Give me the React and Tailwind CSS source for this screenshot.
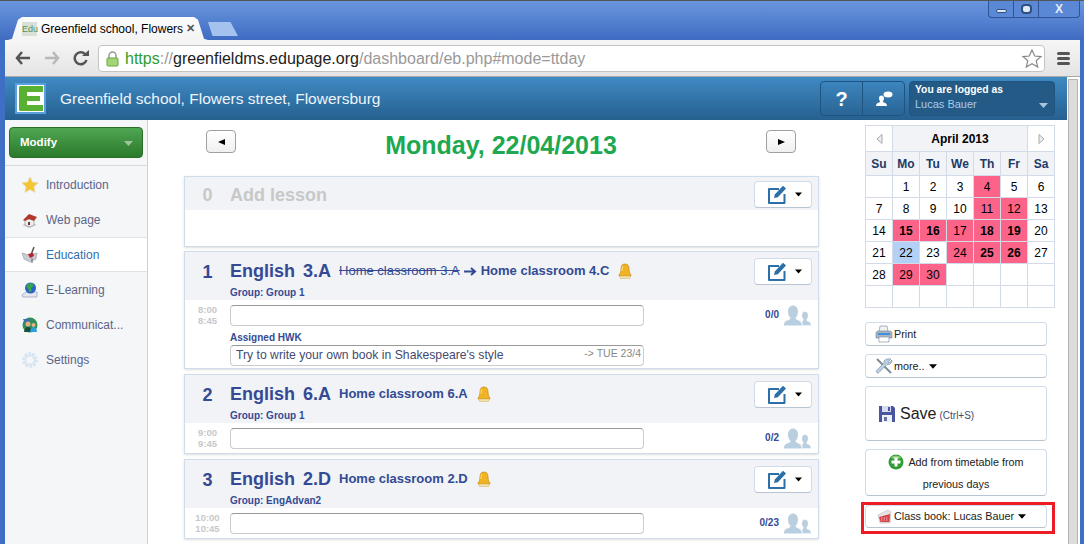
const Caret = ({ className = "" }) => (
    <svg width="9" height="5" viewBox="0 0 9 5" className={className}>
        <path d="M0 0h9L4.5 5z" fill="currentColor" />
    </svg>
);

const StarIcon = () => (
    <svg width="18" height="18" viewBox="0 0 18 18">
        <path d="M9 1l2.4 5.3 5.6.6-4.2 3.8 1.2 5.6L9 13.500l-5 2.800 1.200-5.600L1 6.900l5.600-.6z" fill="#f5c431" stroke="#e8d9a0" />
    </svg>
);

const HouseIcon = () => (
    <svg width="18" height="18" viewBox="0 0 18 18">
        <path d="M1 14l7 3 8-3-7-3z" fill="#ccd" />
        <path d="M4 8h9v6l-4 2-5-2z" fill="#eee" stroke="#888" strokeWidth=".6" />
        <path d="M2 9l6-6 8 3-3 4-5-2-4 2z" fill="#b3382c" />
        <path d="M7 11h2v3H7z" fill="#733" />
    </svg>
);

const EducationIcon = () => (
    <svg width="18" height="18" viewBox="0 0 18 18">
        <path d="M1 7l7 2 8-2-1 6-6 3-6-3z" fill="#c9ccd4" stroke="#888" strokeWidth=".5" />
        <path d="M13 1l-3 8" stroke="#555" strokeWidth="1.500" />
        <path d="M7 8l5-1 1 3-4 2z" fill="#b5222a" />
        <path d="M11 12v5" stroke="#666" />
    </svg>
);

const GlobeIcon = () => (
    <svg width="18" height="18" viewBox="0 0 18 18">
        <path d="M1 14l4-3h11v5H2z" fill="#e4e7ee" stroke="#8a90a8" strokeWidth=".6" />
        <circle cx="9.500" cy="7" r="5.500" fill="#2b63c4" />
        <path d="M7 3l4-1 2 3-3 2 1 3-3 1-1-4-2-1z" fill="#39a54a" />
    </svg>
);

const CommIcon = () => (
    <svg width="18" height="18" viewBox="0 0 18 18">
        <circle cx="9" cy="9" r="7.500" fill="#2f8f57" />
        <path d="M2 3h7v4H4z" fill="#3b6fb5" />
        <circle cx="7" cy="8" r="2.500" fill="#e6b186" />
        <path d="M3 16c0-3 2-5 4-5s4 2 4 5z" fill="#1c4f3a" />
        <circle cx="12.500" cy="9" r="2" fill="#e6b186" />
        <path d="M9 16c0-3 2-5 3.500-5s3.500 2 3.500 5z" fill="#27a0dc" />
    </svg>
);

const GearIcon = () => (
    <svg width="18" height="18" viewBox="0 0 18 18">
        <circle cx="9" cy="9" r="6" fill="none" stroke="#d5e4f2" strokeWidth="3.500" strokeDasharray="2.500 1.200" />
        <circle cx="9" cy="9" r="4.500" fill="none" stroke="#dbe6f0" strokeWidth="2" />
    </svg>
);

const BellIcon = () => (
    <svg width="14" height="16" viewBox="0 0 14 16">
        <path d="M7 1c-3 0-4 2-4 5 0 3-1 5-2 6v1h12v-1c-1-1-2-3-2-6 0-3-1-5-4-5z" fill="#f0b323" stroke="#c98a14" strokeWidth=".7" />
        <path d="M1.500 13h11l-1 2.500h-9z" fill="#f0e2b0" stroke="#d6b25a" strokeWidth=".5" />
        <path d="M5 3c-1 1-1 3-1 5" stroke="#fbe58a" fill="none" />
    </svg>
);

const EditIcon = () => (
    <svg width="19" height="19" viewBox="0 0 19 19">
        <path d="M11 4H1v14h15.500V9" fill="none" stroke="#2a6fa8" strokeWidth="2" strokeLinejoin="round" />
        <path d="M6 13l.8-3.500L15 .8l3 2.700-8.200 8.700z" fill="#2a6fa8" />
    </svg>
);

const PeopleIcon = () => (
    <svg width="27" height="21" viewBox="0 0 27 21">
        <path d="M0 20.500c0-3.500 1.500-4.500 4.500-5.500 1.500-.5 2-1.200 2-2.200C5 11.500 4 9.500 4 6.500 4 3 6.200.5 9 .5s5 2.500 5 6c0 3-1 5-2.500 6.300 0 1 .5 1.700 2 2.200 2.500.8 4 2 4.500 5.500z" fill="#b9cfe0" />
        <path d="M18 20.500h9c0-2.500-1-3.500-3-4.200-1-.4-1.500-1-1.500-1.600 1-1 1.700-2.500 1.700-4.200 0-2.500-1.500-4-3.200-4s-3.200 1.500-3.200 4c0 1.700.7 3.200 1.700 4.200 0 .6-.3 1-1 1.400 0 0-1 .5-.5 1 .5 1 .5 2.400 0 3.400z" fill="#b9cfe0" stroke="#fff" strokeWidth=".4" />
    </svg>
);

const PrinterIcon = () => (
    <svg width="18" height="18" viewBox="0 0 18 18">
        <path d="M5 1h7l1 6H4z" fill="#f0f2f5" stroke="#8a93a0" strokeWidth=".7" />
        <path d="M1 8c0-1 1-2 2-2h12c1 0 2 1 2 2v5H1z" fill="#aab4c2" stroke="#77808e" strokeWidth=".6" />
        <path d="M3 8h12v2H3z" fill="#3f8fdc" />
        <path d="M4 12h10v5H4z" fill="#fff" stroke="#8a93a0" strokeWidth=".7" />
    </svg>
);

const ToolsIcon = () => (
    <svg width="18" height="18" viewBox="0 0 18 18">
        <path d="M2 2l14 14" stroke="#7f8b98" strokeWidth="2" />
        <path d="M16 2l-3 3 1 1 3-3c0 3-2 5-5 4.500L4 15.500c-1 1.500-3.500 0-2.500-2L9 6c-1-3 3-5 7-4z" fill="#b9cfe0" stroke="#66788a" strokeWidth=".5" />
    </svg>
);

const FloppyIcon = () => (
    <svg width="16" height="16" viewBox="0 0 16 16">
        <path d="M0 0h14l2 2v14H0z" fill="#4a55a0" />
        <path d="M3 0h9v6H3z" fill="#d9dcf0" />
        <path d="M9 1h2v4H9z" fill="#4a55a0" />
        <path d="M3 9h10v7H3z" fill="#eef0f8" />
        <path d="M5 11h3v4H5z" fill="#66709f" />
    </svg>
);

const AddIcon = () => (
    <svg width="16" height="16" viewBox="0 0 16 16">
        <circle cx="8" cy="8" r="7.500" fill="#2f9c34" />
        <path d="M3 3.500a7 7 0 0 1 10 0c-3 2-7 2-10 0z" fill="#8ed27f" />
        <path d="M6.500 3.500h3v3h3v3h-3v3h-3v-3h-3v-3h3z" fill="#fff" />
    </svg>
);

const BookIcon = () => (
    <svg width="15" height="16" viewBox="0 0 15 16">
        <path d="M1 6l10-5 3 2-1 11H3z" fill="#e8e3e3" stroke="#aaa" strokeWidth=".5" />
        <path d="M2 8l11-3-.5 8H3.500z" fill="#d8404a" />
        <path d="M4 9h7M4 11h7" stroke="#f3b7ba" strokeDasharray="1.500 1" />
    </svg>
);

const menu = [
    { label: "Introduction", icon: <StarIcon /> },
    { label: "Web page", icon: <HouseIcon /> },
    { label: "Education", icon: <EducationIcon />, active: true },
    { label: "E-Learning", icon: <GlobeIcon /> },
    { label: "Communicat...", icon: <CommIcon /> },
    { label: "Settings", icon: <GearIcon /> },
];

const lessons = [
    { no: 2, cls: "6.A", room: "Home classroom 6.A", group: "Group 1", from: "9:00", to: "9:45", count: "0/2" },
    { no: 3, cls: "2.D", room: "Home classroom 2.D", group: "EngAdvan2", from: "10:00", to: "10:45", count: "0/23" },
];

const pink = [4, 11, 12, 15, 16, 17, 18, 19, 24, 25, 26, 29, 30];
const boldDays = [15, 16, 18, 19, 25, 26];
const weeks = [
    ["", 1, 2, 3, 4, 5, 6],
    [7, 8, 9, 10, 11, 12, 13],
    [14, 15, 16, 17, 18, 19, 20],
    [21, 22, 23, 24, 25, 26, 27],
    [28, 29, 30, "", "", "", ""],
    ["", "", "", "", "", "", ""],
];

function EditButton() {
    return (
        <div className="flex h-[27px] w-[58px] items-center rounded border border-[#d0dcea] border-b-[#b9c4d2] bg-white pl-[13px]">
            <EditIcon />
            <Caret className="ml-[8px] w-[7px] text-black" />
        </div>
    );
}

function LessonHeader({ no, children, group }) {
    return (
        <div className="flex bg-[#f1f3f6] pr-[6px] pt-[6px]">
            <div className="w-[45px] pt-[3px] text-center text-[18px] font-bold leading-[22px] text-[#344a94]">{no}</div>
            <div className="flex-1">
                <div className="flex h-[26px] items-center text-[#344a94]">{children}</div>
                <div className="h-[16px] pt-[2px] text-[10px] font-bold leading-[14px] text-[#344a94]">Group: {group}</div>
            </div>
            <EditButton />
        </div>
    );
}

function LessonRow({ from, to, count }) {
    return (
        <div className="flex items-start">
            <div className="-mt-[1px] h-[23px] w-[45px] text-center text-[9.500px] font-bold leading-[11px] text-[#c8c8c8]">
                {from}
                <br />
                {to}
            </div>
            <div className="h-[21px] w-[414px] rounded-sm border border-[#ccc] border-t-[#999] bg-white" />
            <div className="flex flex-1 items-center justify-end pr-[7px]">
                <span className="mb-[3px] mr-[5px] text-[10px] font-bold text-[#344a94]">{count}</span>
                <PeopleIcon />
            </div>
        </div>
    );
}

function SideButton({ className = "", children }) {
    return (
        <div className={`flex w-[182px] items-center rounded border border-[#d0dcea] border-b-[#b9c4d2] bg-white text-[10.800px] text-[#222] ${className}`}>
            {children}
        </div>
    );
}

function DayButton({ className = "", points }) {
    return (
        <div className={`flex h-[23px] w-[30px] items-center justify-center rounded-sm border border-[#a0a0a0] bg-gradient-to-b from-white to-[#f0f0f0] ${className}`}>
            <svg width="7" height="6" viewBox="0 0 7 6">
                <path d={points} fill="#000" />
            </svg>
        </div>
    );
}

export default function App() {
    return (
        <div className="flex h-[544px] w-[1084px] flex-col overflow-hidden bg-[#3f6fc4] font-['Liberation_Sans',Arial,sans-serif]">
            {/* Browser tabs */}
            <div className="relative h-[40px] shrink-0 border-t border-[#555] bg-gradient-to-b from-[#6a96de] to-[#3f6cc2] pl-[8px] pt-[16px]">
                <div className="flex h-[23px] w-[200px] items-center bg-gradient-to-b from-[#fbfcfe] to-[#f4f4f4] pl-[14px] [clip-path:polygon(0_100%,2%_95%,5%_12%,7%_0,93%_0,95%_12%,98%_95%,100%_100%)]">
                    <div className="h-[14px] w-[15px] bg-[#d8e0d8] text-[9px] leading-[14px] text-[#5a8f5a]">Edu</div>
                    <span className="ml-[4px] w-[140px] whitespace-nowrap text-[12px] text-black">Greenfield school, Flowers</span>
                    <span className="ml-[5px] text-[11px] font-bold text-[#555]">✕</span>
                </div>
                <div className="absolute left-[208px] top-[21px] h-[14px] w-[30px] bg-[#a3c2ee] [clip-path:polygon(0_0,75%_0,100%_100%,15%_100%)]" />
                <div className="absolute right-[4px] top-0 flex h-[17px] w-[92px] rounded-b border border-t-0 border-[#2f5596] bg-[#5a88d4]">
                    <div className="flex w-[25px] items-center justify-center border-r border-[#2f5596]">
                        <div className="mt-[3px] h-[4px] w-[11px] rounded-sm border border-[#2f4f80] bg-[#dfe8f5]" />
                    </div>
                    <div className="flex w-[25px] items-center justify-center border-r border-[#2f5596]">
                        <div className="h-[10px] w-[11px] rounded-sm border-2 border-[#2f4f80] bg-[#dfe8f5]" />
                    </div>
                    <div className="flex-1 text-center text-[12px] font-bold leading-[16px] text-[#e4ecf8]">X</div>
                </div>
            </div>

            <div className="ml-[5px] mr-[4px] flex min-h-0 flex-1 flex-col">
                {/* Browser toolbar */}
                <div className="flex h-[37px] shrink-0 items-center border-b border-[#a8a8a8] bg-gradient-to-b from-[#f6f6f6] to-[#e4e4e4] pl-[10px]">
                    <svg width="16" height="14" viewBox="0 0 16 14">
                        <path d="M7 1L2 7l5 6M2 7h13" fill="none" stroke="#555" strokeWidth="2.500" />
                    </svg>
                    <svg width="16" height="14" viewBox="0 0 16 14" className="ml-[13px]">
                        <path d="M9 1l5 6-5 6M14 7H1" fill="none" stroke="#b8b8b8" strokeWidth="2.500" />
                    </svg>
                    <svg width="16" height="16" viewBox="0 0 16 16" className="ml-[13px]">
                        <path d="M13.500 10A6 6 0 1 1 12 4" fill="none" stroke="#555" strokeWidth="2.500" />
                        <path d="M9 6h7V0z" fill="#555" />
                    </svg>
                    <div className="ml-[9px] flex h-[27px] w-[947px] items-center rounded-sm border border-[#c4c4c4] bg-white pl-[7px] pt-[1px] text-[16px]">
                        <svg width="13" height="16" viewBox="0 0 13 16">
                            <path d="M3 7V4.500a3.500 3.500 0 0 1 7 0V7" fill="none" stroke="#999" strokeWidth="1.500" />
                            <rect x="1" y="7" width="11" height="8" rx="1" fill="#a2d574" stroke="#6fa544" />
                        </svg>
                        <span className="ml-[6px] text-[#2e9c2e]">https</span>
                        <span className="text-[#999]">://</span>
                        <span className="text-[#222]">greenfieldms.edupage.org</span>
                        <span className="text-[#999]">/dashboard/eb.php#mode=ttday</span>
                        <svg width="20" height="19" viewBox="0 0 20 19" className="ml-auto mr-[2px]">
                            <path d="M10 1l2.700 6 6.300.6-4.800 4.200 1.500 6.200L10 14.700 4.300 18l1.500-6.200L1 7.600 7.300 7z" fill="#fff" stroke="#888" strokeWidth="1.200" />
                        </svg>
                    </div>
                    <div className="ml-[12px] flex w-[13px] flex-col gap-[2px]">
                        <div className="h-[3px] rounded-sm bg-[#555]" />
                        <div className="h-[3px] rounded-sm bg-[#555]" />
                        <div className="h-[3px] rounded-sm bg-[#555]" />
                    </div>
                </div>

                <div className="flex min-h-0 flex-1 bg-white">
                    <div className="flex min-w-0 w-[1062px] shrink-0 flex-col">
                        {/* School header */}
                        <div className="flex h-[43px] shrink-0 items-center bg-gradient-to-b from-[#3f8ac4] to-[#26608f] pl-[10px]">
                            <div className="flex h-[31px] w-[31px] items-center justify-center bg-[#5aa0dc]">
                                <div className="flex h-[27px] w-[27px] items-center justify-center bg-white">
                                    <svg width="24" height="25" viewBox="0 0 24 25">
                                        <path d="M1 0h23v6H8v4h13v5H8v4h16v6H1l-1-1V1z" fill="#58b133" />
                                    </svg>
                                </div>
                            </div>
                            <div className="ml-[14px] w-[321px] whitespace-nowrap text-[15.500px] text-[#eef4fa]">Greenfield school, Flowers street, Flowersburg</div>
                            <div className="ml-[439px] flex h-[35px] w-[85px] rounded border border-[#1f5480]">
                                <div className="flex w-[42px] items-center justify-center border-r border-[#1f5480] text-[20px] font-bold text-white">?</div>
                                <div className="flex flex-1 items-center justify-center">
                                    <svg width="18" height="16" viewBox="0 0 18 16">
                                        <path d="M1 15c0-2 1-3 3-3.500 1-.5 1-1 1-1.500-.500-.5-1-1.500-1-3 0-1.500 1-2.500 2.500-2.500S9 5.500 9 7c0 1.500-.500 2.500-1 3 0 .5 0 1 1 1.500 2 .5 3 1.500 3 3.500z" fill="#fff" />
                                        <ellipse cx="13" cy="3.500" rx="4.500" ry="3" fill="#fff" />
                                    </svg>
                                </div>
                            </div>
                            <div className="ml-[4px] h-[35px] w-[146px] rounded border border-[#21557f] bg-[#245a86] pl-[5px]">
                                <div className="pt-[1px] text-[10.300px] font-bold leading-[14px] text-white">You are logged as</div>
                                <div className="flex items-center pr-[6px] text-[11px] leading-[15px] text-[#a6cbec]">
                                    Lucas Bauer
                                    <Caret className="ml-auto mt-[2px] text-[#a9c4da]" />
                                </div>
                            </div>
                        </div>

                        <div className="flex min-h-0 flex-1">
                            {/* Sidebar */}
                            <div className="w-[143px] shrink-0 border-r border-[#cdd2d8] bg-[#f4f6f8] pt-[7px]">
                                <div className="mx-[4px] flex h-[31px] w-[134px] items-center rounded-sm border border-[#2a6e2a] bg-gradient-to-b from-[#4fa651] to-[#2a7a2c] pl-[10px] pr-[9px] pt-[1px] text-[11.500px] font-bold text-white">
                                    Modify
                                    <Caret className="ml-auto text-[#9cc79c]" />
                                </div>
                                <div className="mt-[7px] mb-[1px] border-t border-[#d6dbe0]" />
                                {menu.map((item) => (
                                    <div
                                        key={item.label}
                                        className={`flex h-[35px] items-center pl-[16px] text-[12px] ${item.active ? "border-y border-[#dfe2e6] bg-white text-[#2f6fae]" : "text-[#5c6488]"}`}
                                    >
                                        {item.icon}
                                        <span className="ml-[7px]">{item.label}</span>
                                    </div>
                                ))}
                            </div>

                            {/* Day view */}
                            <div className="w-[717px] shrink-0 pl-[36px] pt-[5px]">
                                <div className="flex h-[46px] w-[635px] items-start pl-[22px] pt-[5px]">
                                    <DayButton points="M0 3l7-3v6z" />
                                    <div className="mt-[1px] flex-1 text-center text-[25px] font-bold leading-[28px] text-[#1ea850]">Monday, 22/04/2013</div>
                                    <DayButton className="mr-[23px]" points="M7 3L0 0v6z" />
                                </div>

                                <div className="mt-[5px] h-[71px] w-[635px] border border-[#cfdcec] shadow-sm">
                                    <div className="flex h-[33px] bg-[#f1f3f6] pr-[6px] pt-[4px]">
                                        <div className="w-[45px] text-center text-[18px] font-bold leading-[28px] text-[#c8c8c8]">0</div>
                                        <div className="flex-1 text-[18px] font-bold leading-[28px] text-[#c8c8c8]">Add lesson</div>
                                        <EditButton />
                                    </div>
                                </div>

                                <div className="mt-[4px] h-[118px] w-[635px] border border-[#cfdcec] shadow-sm">
                                    <LessonHeader no={1} group="Group 1">
                                        <span className="text-[18px] font-bold">English</span>
                                        <span className="ml-[8px] text-[18px] font-bold">3.A</span>
                                        <span className="ml-[8px] text-[13px] line-through">Home classroom 3.A</span>
                                        <svg width="13" height="9" viewBox="0 0 13 9" className="ml-[4px]">
                                            <path d="M0 4.500h10M7 1l4 3.500L7 8" fill="none" stroke="#344a94" strokeWidth="2" />
                                        </svg>
                                        <span className="ml-[4px] text-[13px] font-bold">Home classroom 4.C</span>
                                        <span className="ml-[9px] flex"><BellIcon /></span>
                                    </LessonHeader>
                                    <div className="pt-[5px]">
                                        <LessonRow from="8:00" to="8:45" count="0/0" />
                                    </div>
                                    <div className="mt-[4px] pl-[45px] text-[10px] font-bold leading-[14px] text-[#344a94]">Assigned HWK</div>
                                    <div className="ml-[45px] flex h-[21px] w-[414px] items-center whitespace-nowrap rounded-sm border border-[#ccc] border-t-[#999] bg-white pl-[5px] pr-[2px] text-[12.200px] text-[#444a70]">
                                        Try to write your own book in Shakespeare's style
                                        <span className="ml-auto -mt-[3px] text-[10.500px] text-[#888]">-&gt; TUE 23/4</span>
                                    </div>
                                </div>

                                {lessons.map((l) => (
                                    <div key={l.no} className="mt-[5px] h-[80px] w-[635px] border border-[#cfdcec] shadow-sm">
                                        <LessonHeader no={l.no} group={l.group}>
                                            <span className="text-[18px] font-bold">English</span>
                                            <span className="ml-[8px] text-[18px] font-bold">{l.cls}</span>
                                            <span className="ml-[8px] text-[13px] font-bold">{l.room}</span>
                                            <span className="ml-[9px] flex"><BellIcon /></span>
                                        </LessonHeader>
                                        <div className="pt-[5px]">
                                            <LessonRow from={l.from} to={l.to} count={l.count} />
                                        </div>
                                    </div>
                                ))}
                            </div>

                            {/* Calendar and actions */}
                            <div className="w-[202px] shrink-0 pt-[5px]">
                                <table className="w-[190px] table-fixed border-collapse text-center text-[12px] text-black">
                                    <thead>
                                        <tr className="h-[26px]">
                                            <th className="border border-[#d3dbe8] font-normal text-[#aaa]">
                                                <svg width="7" height="10" viewBox="0 0 7 10" className="mx-auto">
                                                    <path d="M6 .5v9L1 5z" fill="#eee" stroke="#aaa" />
                                                </svg>
                                            </th>
                                            <th colSpan={5} className="border border-[#d3dbe8] bg-[#f1f3f6] font-bold">April 2013</th>
                                            <th className="border border-[#d3dbe8] font-normal text-[#aaa]">
                                                <svg width="7" height="10" viewBox="0 0 7 10" className="mx-auto">
                                                    <path d="M1 .5v9L6 5z" fill="#eee" stroke="#aaa" />
                                                </svg>
                                            </th>
                                        </tr>
                                        <tr className="h-[24px] bg-[#f1f3f6] text-[#1c3a66]">
                                            {["Su", "Mo", "Tu", "We", "Th", "Fr", "Sa"].map((d) => (
                                                <th key={d} className="border border-[#d3dbe8] font-bold">{d}</th>
                                            ))}
                                        </tr>
                                    </thead>
                                    <tbody>
                                        {weeks.map((week, i) => (
                                            <tr key={i} className="h-[22px]">
                                                {week.map((d, j) => (
                                                    <td
                                                        key={j}
                                                        className={`border border-[#d3dbe8] p-0 ${pink.includes(d) ? "bg-[#fb6488]" : ""} ${d === 22 ? "bg-[#b3d1f7]" : ""} ${boldDays.includes(d) ? "font-bold" : ""}`}
                                                    >
                                                        {d}
                                                    </td>
                                                ))}
                                            </tr>
                                        ))}
                                    </tbody>
                                </table>

                                <div className="mt-[14px] flex flex-col">
                                    <SideButton className="h-[24px] pl-[9px]">
                                        <PrinterIcon />
                                        <span className="ml-[1px]">Print</span>
                                    </SideButton>
                                    <SideButton className="mt-[8px] h-[24px] pl-[9px]">
                                        <ToolsIcon />
                                        <span className="ml-[1px]">more..</span>
                                        <Caret className="ml-[4px] w-[8px] text-black" />
                                    </SideButton>
                                    <SideButton className="mt-[8px] h-[55px] pl-[13px]">
                                        <FloppyIcon />
                                        <span className="ml-[5px] text-[16px]">Save</span>
                                        <span className="ml-[3px] mt-[3px] text-[10px] text-[#444a70]">(Ctrl+S)</span>
                                    </SideButton>
                                    <SideButton className="mt-[8px] h-[47px] flex-col justify-center text-center leading-[22px]">
                                        <div className="flex items-center">
                                            <AddIcon />
                                            <span className="ml-[4px]">Add from timetable from</span>
                                        </div>
                                        <div>previous days</div>
                                    </SideButton>
                                    <div className="relative mt-[9px]">
                                        <SideButton className="h-[23px] pl-[11px]">
                                            <BookIcon />
                                            <span className="ml-[2px]">Class book: Lucas Bauer</span>
                                            <Caret className="ml-[4px] w-[8px] text-black" />
                                        </SideButton>
                                        <div className="absolute -left-[4px] -top-[3px] h-[32px] w-[194px] border-[3px] border-[#ed1c24]" />
                                    </div>
                                </div>
                            </div>
                        </div>
                    </div>

                    {/* Scrollbar */}
                    <div className="w-[13px] shrink-0 pl-[1px] pt-[2px]">
                        <div className="h-full w-[10px] border-x border-t border-[#b4b4b4] bg-[#dcdcdc]" />
                    </div>
                </div>
            </div>
        </div>
    );
}
